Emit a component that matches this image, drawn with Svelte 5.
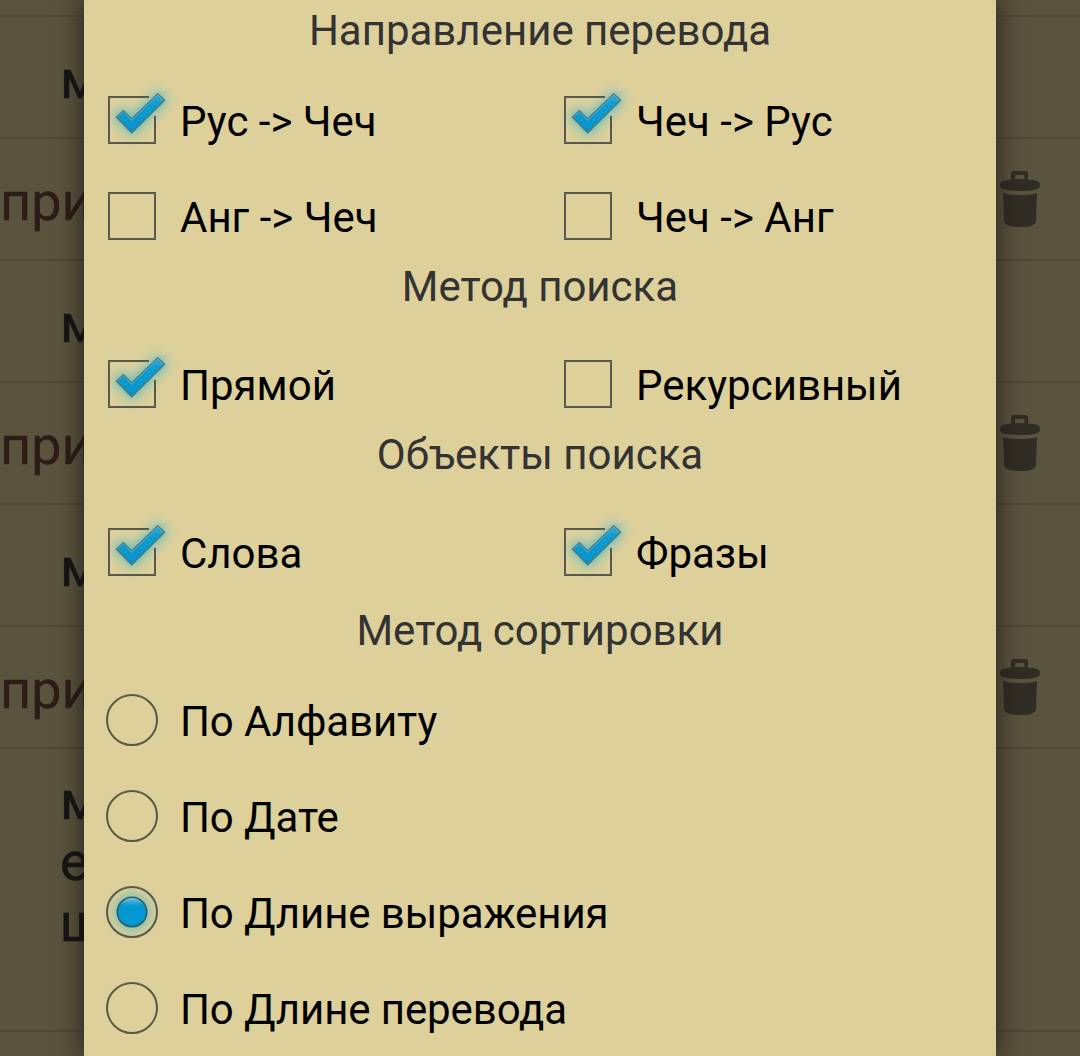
<script>
  const rows = [
    { text: 'м', kind: 'word' },
    { text: 'при', kind: 'translation' },
    { text: 'м', kind: 'word' },
    { text: 'при', kind: 'translation' },
    { text: 'м', kind: 'word' },
    { text: 'при', kind: 'translation' },
  ];

  const groups = [
    {
      title: 'Направление перевода',
      low: true,
      options: [
        { label: 'Рус -> Чеч', on: true },
        { label: 'Чеч -> Рус', on: true },
        { label: 'Анг -> Чеч', on: false },
        { label: 'Чеч -> Анг', on: false },
      ],
    },
    {
      title: 'Метод поиска',
      options: [
        { label: 'Прямой', on: true },
        { label: 'Рекурсивный', on: false },
      ],
    },
    {
      title: 'Объекты поиска',
      options: [
        { label: 'Слова', on: true },
        { label: 'Фразы', on: true },
      ],
    },
  ];

  const sorts = ['По Алфавиту', 'По Дате', 'По Длине выражения', 'По Длине перевода'];
  let selected = $state(2);
</script>

<svg class="defs" width="0" height="0" aria-hidden="true">
  <defs>
    <filter id="glow" x="-60%" y="-60%" width="220%" height="220%">
      <feGaussianBlur stdDeviation="5.5" />
    </filter>
    <linearGradient id="blue" x1="0" y1="0" x2="0" y2="1">
      <stop offset="0" stop-color="#35a9d8" />
      <stop offset="0.3" stop-color="#0c9cd3" />
      <stop offset="1" stop-color="#0693cc" />
    </linearGradient>
    <linearGradient id="knob" x1="0" y1="0" x2="0" y2="1">
      <stop offset="0" stop-color="#8fcbe3" />
      <stop offset="0.12" stop-color="#48afd9" />
      <stop offset="0.3" stop-color="#0398d2" />
      <stop offset="1" stop-color="#0398d2" />
    </linearGradient>
  </defs>
</svg>

<div class="screen">
  <div class="list">
    <div class="row first"></div>
    {#each rows as row}
      <div class="row">
        <span class={row.kind}>{row.text}</span>
        {#if row.kind === 'translation'}
          <svg class="trash" width="40" height="58" viewBox="0 1 40 58">
            <path d="M11 12V3.5Q11 1 13.500 1H25.500Q28 1 28 3.500V12H24.500V5H15V12Z" />
            <path d="M0 14.500Q0 12 4 10.600Q11 9 20 9T36 10.600Q40 12 40 14.500V16.500Q39 18.500 36 19.500Q30 21 20 21T4 19.500Q1 18.500 0 16.500Z" />
            <path d="M3 23Q10 25 20 25T37 23L36 50Q36 54 32 55.500Q28 57 20 57T8 55.500Q4 54 4 50Z" />
          </svg>
        {/if}
      </div>
    {/each}
    <div class="row tall"><span class="word">м<br />е<br />щ</span></div>
    <div class="row"></div>
  </div>

  <div class="dialog">
    {#each groups as group}
      <h2 class:low={group.low}>{group.title}</h2>
      <div class="grid">
        {#each group.options as option}
          <div class="option">
            <svg width="96" height="96" viewBox="0 0 96 96">
              {#if option.on}
                <path class="glow" d="M32 45L39 39L48 47L74 22L81 28L48 61Z" />
                <path class="frame" d="M65 25H25V71H71V44" />
                <path class="tick" d="M32.300 45L39.300 38.600L47.700 46.800L73.800 21.600L80.600 28.300L47.700 61Z" />
                <path class="shine" d="M34 44.500L39.300 40.100L47.700 48.400L73.800 23.200L79 28.300" />
              {:else}
                <path class="frame" d="M25 25H71V71H25Z" />
              {/if}
            </svg>
            <span>{option.label}</span>
          </div>
        {/each}
      </div>
    {/each}

    <h2 class="low">Метод сортировки</h2>
    {#each sorts as label, i}
      <div class="option sort">
        <svg width="96" height="96" viewBox="0 0 96 96">
          {#if i === selected}
            <circle class="halo" cx="48" cy="48" r="18" />
          {/if}
          <circle class="frame ring" cx="48" cy="48" r="25" />
          {#if i === selected}
            <circle class="knob" cx="48" cy="48" r="14.700" />
          {/if}
        </svg>
        <span>{label}</span>
      </div>
    {/each}
  </div>
</div>

<style>
  :global(body) {
    background: #5a533d;
    overflow: hidden;
  }

  .defs {
    position: absolute;
  }

  .screen {
    display: grid;
    width: 1080px;
    height: 1056px;
    overflow: hidden;
    background: #5a533d;
    font-family: Roboto, sans-serif;
  }

  .list,
  .dialog {
    grid-area: 1 / 1;
  }

  .list {
    font-size: 54px;
    line-height: 61px;
  }

  .row {
    box-sizing: border-box;
    display: flex;
    justify-content: space-between;
    height: 122px;
    padding: 32px 40px 0 0;
    border-bottom: 2px solid #4f4836;
  }

  .row.first {
    height: 17px;
    padding: 0;
  }

  .row.tall {
    height: 283px;
    padding-top: 21px;
  }

  .word {
    padding-left: 60px;
    color: #151515;
    -webkit-text-stroke: 0.5px #151515;
  }

  .translation {
    color: #2d1c17;
    -webkit-text-stroke: 0.3px #2d1c17;
  }

  .trash {
    fill: #302d25;
  }

  .dialog {
    z-index: 1;
    justify-self: center;
    width: 912px;
    height: 1056px;
    overflow: visible;
    background: #ddd09b;
    box-shadow: 0 0 22px 2px rgba(20, 20, 15, 0.7);
    font-size: 42px;
  }

  h2 {
    box-sizing: border-box;
    height: 72px;
    margin: 0;
    font-size: 42px;
    font-weight: 400;
    line-height: 46px;
    text-align: center;
    color: #333;
  }

  h2.low {
    padding-top: 8px;
  }

  .grid {
    display: grid;
    grid-template-columns: 1fr 1fr;
  }

  .option {
    display: flex;
    height: 96px;
    line-height: 99px;
    color: #000;
    white-space: nowrap;
  }

  .sort {
    letter-spacing: -0.1px;
  }

  .option svg {
    flex: none;
    overflow: visible;
  }

  .frame {
    fill: none;
    stroke: #5a574c;
    stroke-width: 2;
  }

  .glow {
    fill: #50b9c8;
    stroke: #50b9c8;
    stroke-width: 6;
    opacity: 0.8;
    filter: url(#glow);
  }

  .tick {
    fill: url(#blue);
    stroke: #59766f;
    stroke-width: 1.200;
    stroke-linejoin: round;
  }

  .shine {
    fill: none;
    stroke: #5db8d8;
    stroke-width: 1;
    opacity: 0.7;
  }

  .halo {
    fill: #62bab8;
    opacity: 0.85;
    filter: url(#glow);
  }

  .knob {
    fill: url(#knob);
    stroke: #315b66;
    stroke-width: 1.600;
  }
</style>
